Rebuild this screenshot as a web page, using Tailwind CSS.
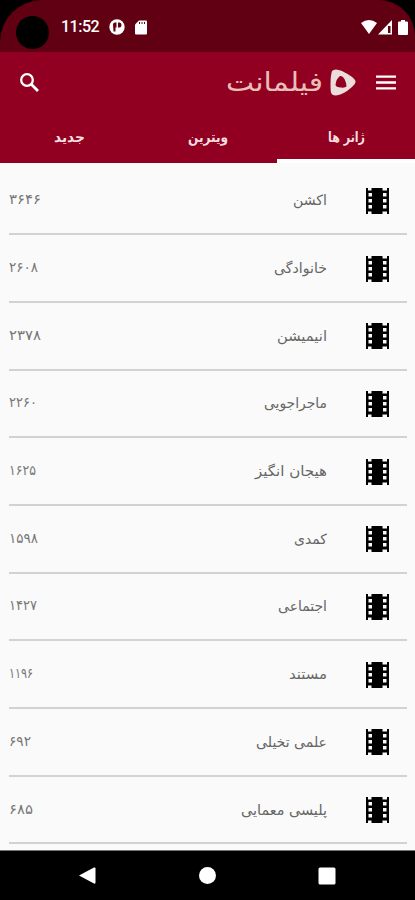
<!DOCTYPE html>
<html lang="fa">

<head>
  <meta charset="UTF-8" />
  <meta name="viewport" content="width=device-width, initial-scale=1.0" />
  <title>فیلمانت</title>
  <script src="https://cdn.jsdelivr.net/npm/@tailwindcss/browser@4"></script>
</head>

<body class="bg-black">
  <div class="relative flex flex-col w-[415px] h-[900px] overflow-hidden bg-black font-['DejaVu_Sans',sans-serif]">

    <!-- Status bar -->
    <div class="h-[52px] shrink-0 flex items-center justify-between pl-[61px] pr-[7px] pt-[2px] bg-[#600012] rounded-tl-[42px] rounded-tr-[36px] text-white">
      <div class="absolute left-4 top-4 size-[33px] rounded-full bg-black"></div>
      <div class="flex items-center">
        <span class="w-[38px] text-[16px] font-medium tracking-[-0.5px] leading-none whitespace-nowrap font-['Roboto',sans-serif]">11:52</span>
        <svg class="size-4 ml-[10px]" viewBox="0 0 16 16">
          <circle cx="8" cy="8" r="7.7" fill="#fff" />
          <path d="M4 5.500Q4 3.500 6 3.500H7.500V8.500H6.500V12.500H4.500zM9 3.500h1.500Q12.500 3.500 12.500 6T10.500 8.500H9z" fill="#600012" />
        </svg>
        <svg class="w-3 h-[15px] ml-[10px]" viewBox="0 0 12 15">
          <path d="M4 0.500h7q1 0 1 1v12q0 1-1 1H1q-1 0-1-1V4.500z" fill="#fff" />
          <path d="M4.500 2v2M7 2v2M9.500 2v2" stroke="#600012" stroke-width="1" />
        </svg>
      </div>
      <div class="flex items-center">
        <svg class="w-4 h-[14px]" viewBox="0 0 16 14"><path d="M0 3q8-6 16 0L8 14z" fill="#fff" /></svg>
        <svg class="w-[14px] h-[15px] ml-[1px]" viewBox="0 0 14 15">
          <path d="M14 0v14.500H0z" fill="#fff" />
          <path d="M10 6h2.500v7H10z" fill="#600012" />
        </svg>
        <svg class="w-[10px] h-[15px] ml-[6px]" viewBox="0 0 10 15"><path d="M3 0h4v1.500h2q1 0 1 1V14q0 1-1 1H1q-1 0-1-1V2.500q0-1 1-1h2z" fill="#fff" /></svg>
      </div>
    </div>

    <!-- App bar -->
    <div class="h-[59px] shrink-0 flex items-center justify-between px-[19px] pt-[2px] bg-[#910020]">
      <svg class="size-[22px]" viewBox="0 0 22 22" fill="none" stroke="#fff">
        <circle cx="8" cy="8" r="5.800" stroke-width="2.300" />
        <path d="M12.500 12.500l6.500 6.500" stroke-width="2.900" />
      </svg>
      <div class="flex items-center">
        <svg class="w-[98px] h-[34px] overflow-visible" viewBox="0 0 98 34">
          <text x="97" y="25" direction="rtl" textLength="97" lengthAdjust="spacingAndGlyphs" font-size="26" fill="#e8bfb8" font-family="DejaVu Sans">فیلمانت</text>
        </svg>
        <svg class="w-[26px] h-[27px] ml-[6px] mr-[20px]" viewBox="0 0 26 27">
          <path d="M2 2Q5-1 12 2Q24 8 25.500 12Q26 15 22 18Q13 26 6 26.500Q1 26.500 0.700 22Q0 8 2 2z" fill="#ecdcdc" />
          <path d="M10 7Q12.500 6.500 14.500 10Q16.500 14 16.500 17.500Q15 19 11 18.500Q6 18 5.500 16Q6 10 10 7z" fill="#910020" />
        </svg>
        <svg class="w-5 h-[15px]" viewBox="0 0 20 15"><path d="M0 1.700h20M0 7.500h20M0 13.300h20" stroke="#fff" stroke-width="2.300" /></svg>
      </div>
    </div>

    <!-- Tabs -->
    <div dir="rtl" class="h-[52px] shrink-0 grid grid-cols-3 bg-[#910020] text-[#f6dfe0] text-sm text-center font-bold">
      <div class="pt-[15px] border-b-4 border-white"><svg class="w-[38px] h-6 mx-auto overflow-visible" viewBox="0 0 38 24"><text x="38" y="15.500" textLength="37" lengthAdjust="spacingAndGlyphs" fill="currentColor">ژانر ها</text></svg></div>
      <div class="pt-[15px]"><svg class="w-[40px] h-6 mx-auto overflow-visible" viewBox="0 0 40 24"><text x="40" y="15.500" textLength="40" lengthAdjust="spacingAndGlyphs" fill="currentColor">ویترین</text></svg></div>
      <div class="pt-[15px]"><svg class="w-[31px] h-6 mx-auto overflow-visible" viewBox="0 0 31 24"><text x="31" y="15.500" textLength="31" lengthAdjust="spacingAndGlyphs" fill="currentColor">جدید</text></svg></div>
    </div>

    <!-- Genres -->
    <div id="GenreList" class="h-[688px] shrink-0 pl-[9px] pr-2 pt-[4.500px] bg-[#fafafa] overflow-hidden border-b border-[#777]"></div>

    <!-- Navigation bar -->
    <div class="flex-1 bg-black">
      <svg class="w-[415px] h-[49px]" viewBox="0 1 415 49" fill="#fff">
        <path d="M79 25.500l15-8q1.500-.5 1.500 1v14q0 1.500-1.500 1z" />
        <circle cx="207.500" cy="25.500" r="8.500" />
        <rect x="318.500" y="17.500" width="17" height="17" rx="1.500" />
      </svg>
    </div>
  </div>

  <script>
    // name, width of the name, count, width of the count
    const genres = [
      ["اکشن", 34, "۳۶۴۶", 32],
      ["خانوادگی", 53, "۲۶۰۸", 29],
      ["انیمیشن", 50, "۲۳۷۸", 32],
      ["ماجراجویی", 63, "۲۲۶۰", 28],
      ["هیجان انگیز", 72, "۱۶۲۵", 27],
      ["کمدی", 33, "۱۵۹۸", 29],
      ["اجتماعی", 49, "۱۴۲۷", 28],
      ["مستند", 38, "۱۱۹۶", 24],
      ["علمی تخیلی", 71, "۶۹۲", 22],
      ["پلیسی معمایی", 86, "۶۸۵", 24],
    ];

    const filmIcon = `
      <svg class="w-[23px] h-[26px] mr-[18px] mt-[1px]" viewBox="0 0 23 26">
        <path d="M0 0h2v2.500h3.500V0h11v2.500H21V0h2v26h-2v-2.500h-4.500V26h-11v-2.500H2V26H0z" fill="#000" />
        <path d="M2.500 5H6v3.500H2.500zM2.500 11H6v3.500H2.500zM2.500 17H6v3.500H2.500zM17 5h3.500v3.500H17zM17 11h3.500v3.500H17zM17 17h3.500v3.500H17z" fill="#fafafa" />
      </svg>`;

    document.getElementById("GenreList").innerHTML = genres.map(([name, nameWidth, count, countWidth]) => `
      <div class="h-[67.700px] flex items-center border-b-2 border-[#d2d2d2]">
        <svg class="w-[60px] h-6" viewBox="0 0 60 24">
          <text x="0" y="16" textLength="${countWidth}" lengthAdjust="spacingAndGlyphs" font-size="14" fill="#777">${count}</text>
        </svg>
        <svg class="w-[120px] h-6 ml-auto mr-[39px]" viewBox="0 0 120 24">
          <text x="120" y="16.500" direction="rtl" textLength="${nameWidth}" lengthAdjust="spacingAndGlyphs" font-size="14" fill="#666">${name}</text>
        </svg>
        ${filmIcon}
      </div>`).join("");
  </script>
</body>

</html>
